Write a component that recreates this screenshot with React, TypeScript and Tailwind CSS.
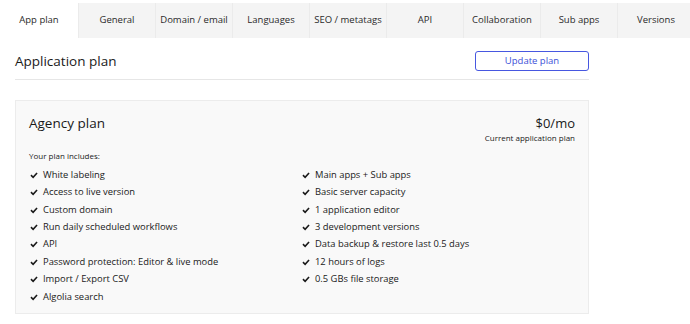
const tabs = [
  "App plan",
  "General",
  "Domain / email",
  "Languages",
  "SEO / metatags",
  "API",
  "Collaboration",
  "Sub apps",
  "Versions",
];

const leftFeatures = [
  "White labeling",
  "Access to live version",
  "Custom domain",
  "Run daily scheduled workflows",
  "API",
  "Password protection: Editor & live mode",
  "Import / Export CSV",
  "Algolia search",
];

const rightFeatures = [
  "Main apps + Sub apps",
  "Basic server capacity",
  "1 application editor",
  "3 development versions",
  "Data backup & restore last 0.5 days",
  "12 hours of logs",
  "0.5 GBs file storage",
];

function Feature({ label }: { label: string }) {
  return (
    <li className="flex items-center h-[17.43px]">
      <svg viewBox="0 0 10 10" className="w-[8px] h-[8px] ml-[1px] mr-[5px] shrink-0">
        <path d="M1.2 5.2 L3.9 7.8 L8.8 2.4" fill="none" stroke="#1a1a1a" strokeWidth="2" />
      </svg>
      <span>{label}</span>
    </li>
  );
}

export default function App() {
  return (
    <div
      className="w-[690px] h-[324px] bg-white text-[#1a1a1a] overflow-hidden"
      style={{ fontFamily: '"Open Sans", sans-serif' }}
    >
      {/* Tabs */}
      <div className="flex pt-[3px] whitespace-nowrap text-[#2a2a2a]">
        {tabs.map((tab, i) => (
          <div
            key={tab}
            className={
              i === 0
                ? "w-[78px] shrink-0 h-[35px] flex items-center justify-center text-[9.5px] bg-white"
                : "w-[77px] shrink-0 h-[35px] flex items-center justify-center text-[9.5px] bg-[#f4f4f4] border-l border-[#ebebeb]"
            }
          >
            {tab}
          </div>
        ))}
      </div>

      <div className="ml-[15px] w-[574px]">
        {/* Header */}
        <div className="flex items-center justify-between mt-[13px] pb-[8px] border-b border-[#e6e6e6]">
          <h1 className="text-[13.5px] leading-[20px]">Application plan</h1>
          <button className="w-[114px] h-[20px] border border-[#4757e0] rounded-[3px] text-[#3b4fd8] text-[9.5px] leading-none">
            Update plan
          </button>
        </div>

        {/* Plan card */}
        <div className="mt-[20px] h-[214px] bg-[#f9f9f9] border border-[#ececec] px-[13px] pt-[13px]">
          <div className="flex justify-between">
            <div className="text-[13.5px] leading-[18px]">Agency plan</div>
            <div className="text-right">
              <div className="text-[13px] leading-[18px]">$0/mo</div>
              <div className="text-[8px] leading-[12px]">Current application plan</div>
            </div>
          </div>
          <div className="text-[8px] leading-[12px] mt-[6px]">Your plan includes:</div>
          <div className="grid grid-cols-[272px_1fr] text-[9.4px] mt-[4px]">
            <ul>
              {leftFeatures.map((f) => (
                <Feature key={f} label={f} />
              ))}
            </ul>
            <ul>
              {rightFeatures.map((f) => (
                <Feature key={f} label={f} />
              ))}
            </ul>
          </div>
        </div>
      </div>
    </div>
  );
}
